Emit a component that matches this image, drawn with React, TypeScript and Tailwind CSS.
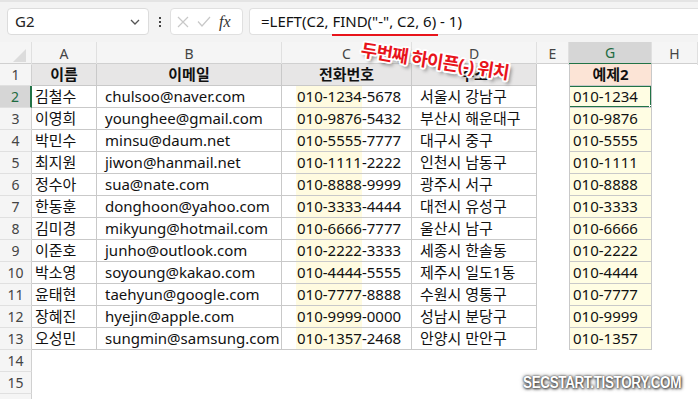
import React from 'react';

const cols = 'grid grid-cols-[32px_65px_185px_130px_125px_32px_83px_1fr]';

const rows = [
  ['김철수', 'chulsoo@naver.com', '010-1234-5678', '서울시 강남구'],
  ['이영희', 'younghee@gmail.com', '010-9876-5432', '부산시 해운대구'],
  ['박민수', 'minsu@daum.net', '010-5555-7777', '대구시 중구'],
  ['최지원', 'jiwon@hanmail.net', '010-1111-2222', '인천시 남동구'],
  ['정수아', 'sua@nate.com', '010-8888-9999', '광주시 서구'],
  ['한동훈', 'donghoon@yahoo.com', '010-3333-4444', '대전시 유성구'],
  ['김미경', 'mikyung@hotmail.com', '010-6666-7777', '울산시 남구'],
  ['이준호', 'junho@outlook.com', '010-2222-3333', '세종시 한솔동'],
  ['박소영', 'soyoung@kakao.com', '010-4444-5555', '제주시 일도1동'],
  ['윤태현', 'taehyun@google.com', '010-7777-8888', '수원시 영통구'],
  ['장혜진', 'hyejin@apple.com', '010-9999-0000', '성남시 분당구'],
  ['오성민', 'sungmin@samsung.com', '010-1357-2468', '안양시 만안구'],
];

const Toolbar: React.FC = () => (
  <div className="h-[42px] bg-[#f3f3f3] border-t-[2px] border-[#e4e4e4] flex items-start pt-[6px] pl-[7px]">
    {/* name box */}
    <div className="w-[142px] h-[27px] bg-white border border-[#dcdcdc] rounded-[4px] flex items-center justify-between pl-[7px] pr-[8px]">
      <span className="text-[15px] text-[#222]">G2</span>
      <svg width="10" height="6" viewBox="0 0 10 6" fill="none" stroke="#555" strokeWidth="1.3">
        <path d="M1 1l4 4 4-4" />
      </svg>
    </div>
    <div className="w-[21px] h-[27px] flex flex-col items-center justify-center gap-[2px]">
      <span className="w-[2px] h-[2px] bg-[#444]" />
      <span className="w-[2px] h-[2px] bg-[#444]" />
      <span className="w-[2px] h-[2px] bg-[#444]" />
    </div>
    {/* cancel / enter / fx */}
    <div className="w-[73px] h-[27px] bg-white border border-[#e0e0e0] rounded-[4px] flex items-center pl-[6px] gap-[8px]">
      <svg width="12" height="12" viewBox="0 0 12 12" stroke="#c8c8c8" strokeWidth="1.2">
        <path d="M1 1l10 10M11 1L1 11" />
      </svg>
      <svg width="14" height="11" viewBox="0 0 14 11" fill="none" stroke="#c8c8c8" strokeWidth="1.2">
        <path d="M1 5.5l4 4.5L13 1" />
      </svg>
      <span className="font-['Liberation_Serif',serif] italic text-[16px] text-[#333] leading-none">fx</span>
    </div>
    {/* formula box */}
    <div className="ml-[6px] flex-1 h-[27px] bg-white border border-[#e0e0e0] border-r-0 rounded-l-[4px] flex items-center pl-[11px]">
      <span className="text-[15px] text-[#111] whitespace-pre">
        =LEFT(C2, <span className="relative">FIND("-", C2, 6)<span className="absolute left-0 right-[-2px] bottom-[-5px] h-[2px] bg-[#e8141b]" /></span> - 1)
      </span>
    </div>
  </div>
);

const ColHeaders: React.FC = () => {
  const letters = ['A', 'B', 'C', 'D', 'E', 'G', 'H'];
  return (
    <div className={`${cols} h-[22px] bg-[#f5f5f5] border-b border-[#d0d0d0]`}>
      <div className="relative border-r border-[#e0e0e0]">
        <div className="absolute right-[5px] bottom-[3px] w-0 h-0 border-l-[13px] border-l-transparent border-b-[13px] border-b-[#dcdcdc]" />
      </div>
      {letters.map((l) =>
        l === 'G' ? (
          <div key={l} className="flex items-center justify-center text-[14px] text-[#1e6b41] bg-[#d6d6d6] border-b-[2px] border-[#217346] border-r border-r-[#e0e0e0]">
            {l}
          </div>
        ) : (
          <div key={l} className="flex items-center justify-center text-[14px] text-[#444] border-r border-[#e0e0e0]">
            {l}
          </div>
        )
      )}
    </div>
  );
};

const RowHead: React.FC<{ n?: number; active?: boolean }> = ({ n, active }) => (
  <div
    className={
      active
        ? 'flex items-center justify-center text-[14px] text-[#1e6b41] bg-[#d6d6d6] border-b border-[#e0e0e0] border-r-[2px] border-r-[#217346]'
        : 'flex items-center justify-center text-[14px] text-[#444] bg-[#f5f5f5] border-b border-[#e0e0e0] border-r border-r-[#d0d0d0]'
    }
  >
    {n}
  </div>
);

const cell = 'border-r border-b border-[#c9c9c9] flex items-center text-[15px] text-[#111] whitespace-nowrap overflow-hidden';

export default function App() {
  return (
    <div className="w-[698px] h-[399px] bg-white relative overflow-hidden font-['Noto_Sans','Noto_Sans_CJK_KR',sans-serif]">
      <Toolbar />
      <ColHeaders />

      {/* header row 1 */}
      <div className={`${cols} h-[22px]`}>
        <RowHead n={1} />
        <div className={`${cell} justify-center bg-[#e7e6e6] font-bold text-[14px]`}>이름</div>
        <div className={`${cell} justify-center bg-[#e7e6e6] font-bold text-[14px]`}>이메일</div>
        <div className={`${cell} justify-center bg-[#e7e6e6] font-bold text-[14px]`}>전화번호</div>
        <div className={`${cell} justify-center bg-[#e7e6e6] font-bold text-[14px]`}>주소</div>
        <div />
        <div className={`${cell} border-l border-l-[#c9c9c9] justify-center bg-[#fce4d6] font-bold text-[14px]`}>예제2</div>
        <div />
      </div>

      {rows.map((r, i) => (
        <div key={i} className={`${cols} h-[22px]`}>
          <RowHead n={i + 2} active={i === 0} />
          <div className={`${cell} pl-[3px]`}>{r[0]}</div>
          <div className={`${cell} pl-[8px]`}>{r[1]}</div>
          <div className={`${cell} items-stretch pl-[14px]`}>
            <span className="flex items-center bg-[#fffbe0] pl-[1px]">{r[2].slice(0, 8)}</span>
            <span className="flex items-center">{r[2].slice(8)}</span>
          </div>
          <div className={`${cell} pl-[8px]`}>{r[3]}</div>
          <div />
          <div className={`${cell} relative border-l border-l-[#c9c9c9] bg-[#fffde3] pl-[3px]`}>
            {r[2].slice(0, 8)}
            {i === 0 && (
              <>
                <div className="absolute inset-[-1px] left-[-2px] border-[2px] border-[#217346]" />
                <div className="absolute right-[-4px] bottom-[-4px] w-[6px] h-[6px] bg-[#217346] border border-white" />
              </>
            )}
          </div>
          <div />
        </div>
      ))}

      {[14, 15].map((n) => (
        <div key={n} className={`${cols} h-[22px]`}>
          <RowHead n={n} />
        </div>
      ))}
      <div className={`${cols} h-[22px]`}>
        <RowHead />
      </div>

      {/* annotation */}
      <div className="absolute left-[361px] top-[36px] rotate-[9deg] origin-left text-[18px] font-bold text-[#e8141b] whitespace-nowrap tracking-[-0.8px] [text-shadow:-1.5px_-1.5px_0_#fff,1.5px_-1.5px_0_#fff,-1.5px_1.5px_0_#fff,1.5px_1.5px_0_#fff,0_-2px_0_#fff,0_2px_0_#fff,-2px_0_0_#fff,2px_0_0_#fff,3px_3px_4px_rgba(0,0,0,0.6)]">
        두번째 하이픈(-) 위치
      </div>

      {/* watermark */}
      <div className="absolute left-[523px] top-[371px] font-['Liberation_Sans',sans-serif] font-bold text-[16px] text-white tracking-[-0.4px] scale-x-[0.84] origin-left [text-shadow:0_0_2px_#444,1px_1px_3px_#333,0_0_5px_#777]">
        SECSTART.TISTORY.COM
      </div>
    </div>
  );
}
